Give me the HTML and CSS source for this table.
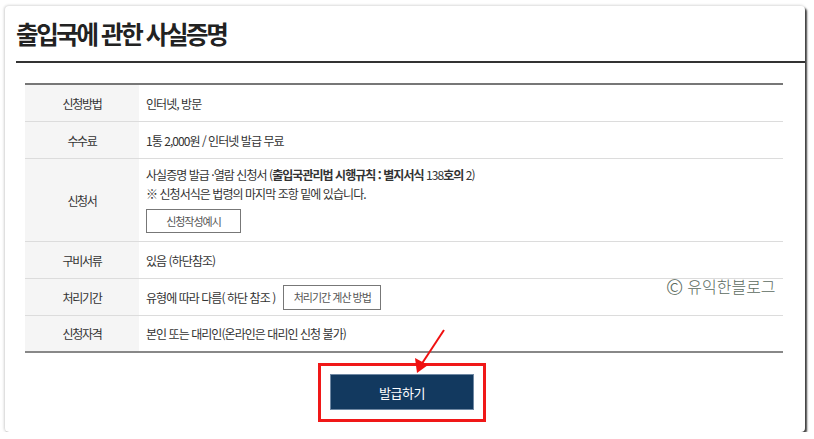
FILE: index.html
```html
<!DOCTYPE html>
<html lang="ko">
<head>
<meta charset="utf-8">
<link rel="stylesheet" href="styles.css">
</head>
<body>
<div class="card">
  <h1 class="title">출입국에 관한 사실증명</h1>
  <div class="table">
    <div class="row"><div class="th">신청방법</div><div class="td">인터넷, 방문</div></div>
    <div class="row"><div class="th">수수료</div><div class="td">1통 2,000원 / 인터넷 발급 무료</div></div>
    <div class="row tall"><div class="th">신청서</div>
      <div class="td stack">
        <p class="line">사실증명 발급 ·열람 신청서 (<b>출입국관리법 시행규칙 : 별지서식</b> 138<b>호의</b> 2)</p>
        <p class="line">※ 신청서식은 법령의 마지막 조항 밑에 있습니다.</p>
        <span class="btn small">신청작성예시</span>
      </div>
    </div>
    <div class="row"><div class="th">구비서류</div><div class="td">있음 (하단참조)</div></div>
    <div class="row"><div class="th">처리기간</div><div class="td">유형에 따라 다름( 하단 참조 ) <span class="btn calc">처리기간 계산 방법</span></div></div>
    <div class="row last"><div class="th">신청자격</div><div class="td">본인 또는 대리인(온라인은 대리인 신청 불가)</div></div>
  </div>
  <div class="actions">
    <div class="highlight"><span class="submit">발급하기</span></div>
  </div>
  <div class="watermark"><span class="copy">©</span> 유익한블로그</div>
  <svg class="arrow" width="60" height="60" viewBox="0 0 60 60">
    <line x1="39" y1="5" x2="16" y2="40" stroke="#f01010" stroke-width="2"/>
    <polygon points="12,48 10,33 23,40" fill="#f01010"/>
  </svg>
</div>
</body>
</html>
```

FILE: styles.css
```css
* { box-sizing: border-box; }
html, body { margin: 0; background: #fff; }
body {
  padding: 6px 0 0 5px;
  font-family: "Noto Sans CJK KR", "Noto Sans", sans-serif;
  color: #333;
}
.card {
  position: relative;
  width: 800px;
  height: 426px;
  background: #fff;
  border-radius: 4px;
  box-shadow: 2px 2px 2px rgba(0,0,0,0.75), -1px 0 3px rgba(0,0,0,0.15), 0 -1px 3px rgba(0,0,0,0.08);
  padding-left: 11px;
}
.title {
  margin: 0;
  height: 57px;
  padding-top: 12px;
  font-size: 24.5px;
  line-height: 32px;
  font-weight: 700;
  letter-spacing: -2.4px;
  color: #222;
  border-bottom: 2px solid #333;
}
.table {
  margin: 20px 22px 0 9px;
  border-top: 2px solid #777;
}
.row {
  display: grid;
  grid-template-columns: 114px 1fr;
  min-height: 37px;
  border-bottom: 1px solid #dcdcdc;
  font-size: 12px;
  letter-spacing: -0.95px;
}
.row.last { border-bottom: 2px solid #888; }
.th {
  background: #f5f5f5;
  display: flex;
  align-items: center;
  justify-content: center;
  color: #333;
  letter-spacing: -1.3px;
}
.td {
  display: flex;
  align-items: center;
  padding-left: 7px;
  color: #333;
}
.td.stack {
  flex-direction: column;
  align-items: flex-start;
  justify-content: flex-start;
  padding-top: 6px;
  padding-bottom: 8px;
}
.line { margin: 0; line-height: 19px; }
.line b { font-weight: 700; }
.btn {
  display: inline-flex;
  align-items: center;
  justify-content: center;
  border: 1px solid #777;
  background: #fff;
  color: #555;
  font-size: 11px;
  letter-spacing: -1px;
}
.btn.small { width: 95px; height: 24px; margin-top: 6px; }
.btn.calc { width: 98px; height: 25px; margin-left: 8px; }
.actions {
  display: flex;
  justify-content: center;
  margin: 10px 22px 0 5px;
}
.highlight {
  border: 3px solid #f01818;
  padding: 8px 9px 9px 9px;
}
.submit {
  display: flex;
  align-items: center;
  justify-content: center;
  width: 144px;
  height: 36px;
  background: #12395f;
  border: 1px solid #6f88a3;
  color: #fff;
  font-size: 13px;
  letter-spacing: -0.5px;
}
.watermark {
  position: absolute;
  left: 661px;
  top: 268px;
  font-size: 16px;
  color: #5c6b60;
  font-weight: 300;
  display: flex;
  align-items: center;
  gap: 4px;
}
.copy { font-size: 21px; line-height: 24px; }
.arrow {
  position: absolute;
  left: 400px;
  top: 319px;
}
```
